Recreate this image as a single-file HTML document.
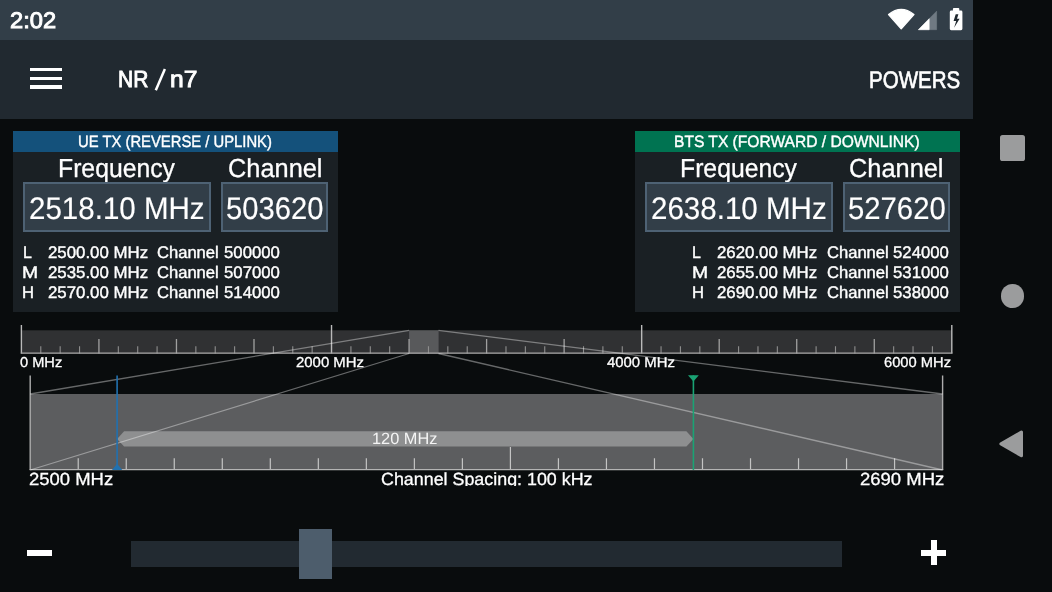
<!DOCTYPE html>
<html lang="en">
<head>
<meta charset="utf-8">
<title>NR / n7</title>
<style>
*{box-sizing:border-box;margin:0;padding:0}
html,body{width:1052px;height:592px;overflow:hidden;background:#090c0d;font-family:"Liberation Sans",sans-serif;color:#fff}
#screen{position:relative;width:1052px;height:592px;overflow:hidden;background:#090c0d}
.abs{position:absolute}
.t{position:absolute;white-space:pre;transform-origin:0 0;display:block;font-family:"Liberation Sans",sans-serif}
#status{left:0;top:0;width:973px;height:40px;background:#323e48;z-index:1}
#appbar{left:0;top:40px;width:973px;height:79px;background:#212930}
.panel{top:131px;width:325px;height:181px;background:#1a2024}
.phead{left:0;top:0;width:325px;height:21px}
.vbox{top:51px;height:49.7px;background:#323e48;border:2px solid #4e6274}
#track{left:131px;top:541px;width:711px;height:26px;background:#222a31}
#thumb{left:299px;top:529px;width:33px;height:50px;background:#4d5d6c}
.clip{position:absolute;left:0;top:0;width:1052px;height:486px;overflow:hidden;will-change:transform;z-index:3}
</style>
</head>
<body>
<div id="screen">
  <div id="status" class="abs"></div>
  <div id="appbar" class="abs"></div>

  <!-- status icons -->
  <svg class="abs" style="left:880px;top:0;z-index:2" width="93" height="39" viewBox="880 0 93 39">
    <path d="M888.6 14.6 Q901.2 4.2 913.9 14.6 L901.2 28.8 Z" fill="#fff" stroke="#fff" stroke-width="1.4" stroke-linejoin="round"/>
    <path d="M918.4 29.7 L936.6 11.2 L936.6 29.7 Z" fill="#707a83" stroke="#707a83" stroke-width="0.6" stroke-linejoin="round"/>
    <path d="M918.4 29.7 L929.2 18.7 L929.2 29.7 Z" fill="#fff" stroke="#fff" stroke-width="0.6" stroke-linejoin="round"/>
    <path d="M949.8 12 q0 -1.4 1.4 -1.4 h1.7 v-1.5 q0 -1 1 -1 h4.4 q1 0 1 1 v1.5 h1.7 q1.4 0 1.4 1.4 v16.8 q0 1.4 -1.4 1.4 h-9.8 q-1.4 0 -1.4 -1.4 Z" fill="#fff"/>
    <path d="M958.4 14.3 L955.7 14.3 L953.6 21 L956.2 21 L954.1 27.8 L959.6 18.7 L957 18.7 Z" fill="#1f282f"/>
  </svg>

  <!-- hamburger -->
  <div class="abs" style="left:30.3px;top:67.8px;width:31.5px;height:3.5px;background:#fff"></div>
  <div class="abs" style="left:30.3px;top:76.6px;width:31.5px;height:3.5px;background:#fff"></div>
  <div class="abs" style="left:30.3px;top:85.4px;width:31.5px;height:3.5px;background:#fff"></div>

  <svg class="abs" style="left:150px;top:64px" width="20" height="30" viewBox="150 64 20 30"><path d="M155.8 90.2L164.9 68.9" stroke="#fff" stroke-width="2.5" fill="none"/></svg>

  <!-- panels -->
  <div class="abs panel" style="left:13px">
    <div class="abs phead" style="background:#14517b"></div>
    <div class="abs vbox" style="left:10px;width:188px"></div>
    <div class="abs vbox" style="left:208px;width:107px"></div>
  </div>
  <div class="abs panel" style="left:635px">
    <div class="abs phead" style="background:#007351"></div>
    <div class="abs vbox" style="left:10px;width:188px"></div>
    <div class="abs vbox" style="left:208px;width:107px"></div>
  </div>

  <!-- rulers -->
  <svg class="abs" style="left:0;top:320px" width="973" height="160" viewBox="0 320 973 160">
    <rect x="21.4" y="330.3" width="930.4" height="23.2" fill="#303133"/>
    <rect x="409.1" y="330.3" width="29.5" height="23.2" fill="#58595b"/>
    <path d="M40.78 346.2V353.5 M60.17 346.2V353.5 M79.55 346.2V353.5 M118.32 346.2V353.5 M137.70 346.2V353.5 M157.08 346.2V353.5 M195.85 346.2V353.5 M215.23 346.2V353.5 M234.62 346.2V353.5 M273.38 346.2V353.5 M292.77 346.2V353.5 M312.15 346.2V353.5 M350.92 346.2V353.5 M370.30 346.2V353.5 M389.68 346.2V353.5 M428.45 346.2V353.5 M447.83 346.2V353.5 M467.22 346.2V353.5 M505.98 346.2V353.5 M525.37 346.2V353.5 M544.75 346.2V353.5 M583.52 346.2V353.5 M602.90 346.2V353.5 M622.28 346.2V353.5 M661.05 346.2V353.5 M680.43 346.2V353.5 M699.82 346.2V353.5 M738.58 346.2V353.5 M757.97 346.2V353.5 M777.35 346.2V353.5 M816.12 346.2V353.5 M835.50 346.2V353.5 M854.88 346.2V353.5 M893.65 346.2V353.5 M913.03 346.2V353.5 M932.42 346.2V353.5" stroke="#8e8e8e" stroke-width="1.1" fill="none"/>
    <path d="M98.93 339.0V353.5 M176.47 339.0V353.5 M254.00 339.0V353.5 M409.07 339.0V353.5 M486.60 339.0V353.5 M564.13 339.0V353.5 M719.20 339.0V353.5 M796.73 339.0V353.5 M874.27 339.0V353.5" stroke="#a0a0a0" stroke-width="1.3" fill="none"/>
    <path d="M21.40 325.1V353.5 M331.53 325.1V353.5 M641.67 325.1V353.5 M951.80 325.1V353.5" stroke="#bababa" stroke-width="1.4" fill="none"/>
    <path d="M20.799999999999997 353.2H952.4" stroke="#a8a8a8" stroke-width="1.2" fill="none"/>
    <rect x="30.2" y="394.0" width="912.4" height="76.0" fill="#5c5d5f"/>
    <path d="M117.1 438.9L124.1 431.3H686.4L693.4 438.9L686.4 446.5H124.1Z" fill="#8e8f90"/>
    <path d="M78.22 458.3V470.0 M126.24 458.3V470.0 M174.26 458.3V470.0 M222.28 458.3V470.0 M270.31 458.3V470.0 M318.33 458.3V470.0 M366.35 458.3V470.0 M414.37 458.3V470.0 M462.39 458.3V470.0 M510.41 447.0V470.0 M558.43 458.3V470.0 M606.45 458.3V470.0 M654.47 458.3V470.0 M702.49 458.3V470.0 M750.52 458.3V470.0 M798.54 458.3V470.0 M846.56 458.3V470.0 M894.58 458.3V470.0" stroke="#c4c4c4" stroke-width="1.2" fill="none"/>
    <path d="M30.2 375.4V470.0 M942.6 375.4V470.0" stroke="#adadad" stroke-width="1.4" fill="none"/>
    <path d="M29.599999999999998 469.6H943.2" stroke="#b4b4b4" stroke-width="1.2" fill="none"/>
    <path d="M409.1 330.3L30.2 394.0 M409.1 353.5L30.2 470.0 M438.5 330.3L942.6 394.0 M438.5 353.5L942.6 470.0" stroke="#fff" stroke-opacity="0.38" stroke-width="1.3" fill="none"/>
    <path d="M117.1 375.4V470.0" stroke="#2171af" stroke-width="1.6" fill="none"/>
    <path d="M111.9 470.0H122.3L117.1 463.8Z" fill="#2171af"/>
    <path d="M693.4 375.4V470.0" stroke="#1aa374" stroke-width="1.6" fill="none"/>
    <path d="M688.0 375.2H698.8L693.4 381.6Z" fill="#1aa374"/>
  </svg>

  <!-- slider -->
  <div class="abs" style="left:27px;top:550px;width:25px;height:5.5px;background:#fff"></div>
  <div id="track" class="abs"></div>
  <div id="thumb" class="abs"></div>
  <div class="abs" style="left:921.3px;top:549.9px;width:25px;height:5.7px;background:#fff"></div>
  <div class="abs" style="left:930.7px;top:540.2px;width:6.1px;height:24.6px;background:#fff"></div>

  <!-- nav bar -->
  <div class="abs" style="left:1000.2px;top:135.3px;width:24.8px;height:25.5px;border-radius:2.6px;background:#9b9c9d"></div>
  <div class="abs" style="left:1000.8px;top:284.3px;width:23.7px;height:23.7px;border-radius:50%;background:#9b9c9d"></div>
  <svg class="abs" style="left:990px;top:420px" width="50" height="50" viewBox="990 420 50 50">
    <path d="M1001 443.9 L1021.4 432.1 L1021.4 455.7 Z" fill="#9b9c9d" stroke="#9b9c9d" stroke-width="3.2" stroke-linejoin="round"/>
  </svg>

  <!-- value-box top borders drawn above label descenders -->
  <div class="abs" style="left:23px;top:182px;width:188px;height:2px;background:#4e6274;z-index:4"></div>
  <div class="abs" style="left:221px;top:182px;width:107px;height:2px;background:#4e6274;z-index:4"></div>
  <div class="abs" style="left:645px;top:182px;width:188px;height:2px;background:#4e6274;z-index:4"></div>
  <div class="abs" style="left:843px;top:182px;width:107px;height:2px;background:#4e6274;z-index:4"></div>

  <div class="clip">
<span class="t" id="t_time" style="left:9.71px;top:10px;font-size:22.5px;line-height:22.5px;font-weight:normal;text-rendering:geometricPrecision;-webkit-text-stroke:0.9px currentColor;color:#fff;transform:scaleX(1.0529)">2:02</span>
<span class="t" id="t_title" style="left:118.18px;top:68px;font-size:23.45px;line-height:23.45px;font-weight:normal;text-rendering:geometricPrecision;-webkit-text-stroke:0.9px currentColor;color:#fff;transform:scaleX(0.8952)">NR</span>
<span class="t" id="t_title2" style="left:170.18px;top:68px;font-size:23.45px;line-height:23.45px;font-weight:normal;text-rendering:geometricPrecision;-webkit-text-stroke:0.9px currentColor;color:#fff;transform:scaleX(1.0495)">n7</span>
<span class="t" id="t_powers" style="left:868.68px;top:69px;font-size:24.0px;line-height:24.0px;font-weight:normal;text-rendering:geometricPrecision;-webkit-text-stroke:0.65px currentColor;color:#fff;transform:scaleX(0.8548)">POWERS</span>
<span class="t" id="t_lh" style="left:78.39px;top:134px;font-size:16.4px;line-height:16.4px;font-weight:normal;text-rendering:geometricPrecision;-webkit-text-stroke:0.4px currentColor;color:#fff;transform:scaleX(0.9035)">UE TX (REVERSE / UPLINK)</span>
<span class="t" id="t_lf" style="left:57.84px;top:155px;font-size:26.0px;line-height:26.0px;font-weight:normal;text-rendering:geometricPrecision;-webkit-text-stroke:0.3px currentColor;color:#fff;transform:scaleX(0.9525)">Frequency</span>
<span class="t" id="t_lc" style="left:227.62px;top:155px;font-size:26.0px;line-height:26.0px;font-weight:normal;text-rendering:geometricPrecision;-webkit-text-stroke:0.3px currentColor;color:#fff;transform:scaleX(0.9756)">Channel</span>
<span class="t" id="t_lfv" style="left:29.17px;top:193px;font-size:31.25px;line-height:31.25px;font-weight:normal;text-rendering:geometricPrecision;-webkit-text-stroke:0.15px currentColor;color:#fff;transform:scaleX(0.9449)">2518.10 MHz</span>
<span class="t" id="t_lcv" style="left:225.99px;top:193px;font-size:31.25px;line-height:31.25px;font-weight:normal;text-rendering:geometricPrecision;-webkit-text-stroke:0.15px currentColor;color:#fff;transform:scaleX(0.9340)">503620</span>
<span class="t" id="t_rh" style="left:674.33px;top:134px;font-size:16.4px;line-height:16.4px;font-weight:normal;text-rendering:geometricPrecision;-webkit-text-stroke:0.4px currentColor;color:#fff;transform:scaleX(0.9508)">BTS TX (FORWARD / DOWNLINK)</span>
<span class="t" id="t_rf" style="left:679.84px;top:155px;font-size:26.0px;line-height:26.0px;font-weight:normal;text-rendering:geometricPrecision;-webkit-text-stroke:0.3px currentColor;color:#fff;transform:scaleX(0.9525)">Frequency</span>
<span class="t" id="t_rc" style="left:849.22px;top:155px;font-size:26.0px;line-height:26.0px;font-weight:normal;text-rendering:geometricPrecision;-webkit-text-stroke:0.3px currentColor;color:#fff;transform:scaleX(0.9756)">Channel</span>
<span class="t" id="t_rfv" style="left:650.97px;top:193px;font-size:31.25px;line-height:31.25px;font-weight:normal;text-rendering:geometricPrecision;-webkit-text-stroke:0.15px currentColor;color:#fff;transform:scaleX(0.9454)">2638.10 MHz</span>
<span class="t" id="t_rcv" style="left:847.99px;top:193px;font-size:31.25px;line-height:31.25px;font-weight:normal;text-rendering:geometricPrecision;-webkit-text-stroke:0.15px currentColor;color:#fff;transform:scaleX(0.9369)">527620</span>
<span class="t" id="t_r0" style="left:20.43px;top:356px;font-size:14.35px;line-height:14.35px;font-weight:normal;text-rendering:geometricPrecision;-webkit-text-stroke:0.3px currentColor;color:#fff;transform:scaleX(1.0189)">0 MHz</span>
<span class="t" id="t_r2" style="left:296.27px;top:356px;font-size:14.35px;line-height:14.35px;font-weight:normal;text-rendering:geometricPrecision;-webkit-text-stroke:0.3px currentColor;color:#fff;transform:scaleX(1.0411)">2000 MHz</span>
<span class="t" id="t_r4" style="left:607.03px;top:356px;font-size:14.35px;line-height:14.35px;font-weight:normal;text-rendering:geometricPrecision;-webkit-text-stroke:0.3px currentColor;color:#fff;transform:scaleX(1.0387)">4000 MHz</span>
<span class="t" id="t_r6" style="left:884.02px;top:356px;font-size:14.35px;line-height:14.35px;font-weight:normal;text-rendering:geometricPrecision;-webkit-text-stroke:0.3px currentColor;color:#fff;transform:scaleX(1.0254)">6000 MHz</span>
<span class="t" id="t_bw" style="left:372.49px;top:431px;font-size:16.25px;line-height:16.25px;font-weight:normal;text-rendering:geometricPrecision;color:#f4f4f4;transform:scaleX(1.0051)">120 MHz</span>
<span class="t" id="t_lo" style="left:29.32px;top:471px;font-size:17.55px;line-height:17.55px;font-weight:normal;text-rendering:geometricPrecision;-webkit-text-stroke:0.3px currentColor;color:#fff;transform:scaleX(1.0530)">2500 MHz</span>
<span class="t" id="t_cs" style="left:380.72px;top:471px;font-size:17.55px;line-height:17.55px;font-weight:normal;text-rendering:geometricPrecision;-webkit-text-stroke:0.3px currentColor;color:#fff;transform:scaleX(1.0190)">Channel Spacing: 100 kHz</span>
<span class="t" id="t_hi" style="left:859.92px;top:471px;font-size:17.55px;line-height:17.55px;font-weight:normal;text-rendering:geometricPrecision;-webkit-text-stroke:0.3px currentColor;color:#fff;transform:scaleX(1.0543)">2690 MHz</span>
<span class="t" id="t_l0a" style="left:22.52px;top:245px;font-size:16.8px;line-height:16.8px;font-weight:normal;text-rendering:geometricPrecision;-webkit-text-stroke:0.4px currentColor;color:#fff;transform:scaleX(0.9506)">L</span>
<span class="t" id="t_l0b" style="left:47.64px;top:245px;font-size:16.8px;line-height:16.8px;font-weight:normal;text-rendering:geometricPrecision;-webkit-text-stroke:0.4px currentColor;color:#fff;transform:scaleX(1.0027)">2500.00 MHz</span>
<span class="t" id="t_l0c" style="left:157.37px;top:245px;font-size:16.8px;line-height:16.8px;font-weight:normal;text-rendering:geometricPrecision;-webkit-text-stroke:0.4px currentColor;color:#fff;transform:scaleX(0.9874)">Channel</span>
<span class="t" id="t_l0d" style="left:223.61px;top:245px;font-size:16.8px;line-height:16.8px;font-weight:normal;text-rendering:geometricPrecision;-webkit-text-stroke:0.4px currentColor;color:#fff;transform:scaleX(0.9979)">500000</span>
<span class="t" id="t_l1a" style="left:22.28px;top:265px;font-size:16.8px;line-height:16.8px;font-weight:normal;text-rendering:geometricPrecision;-webkit-text-stroke:0.4px currentColor;color:#fff;transform:scaleX(1.1529)">M</span>
<span class="t" id="t_l1b" style="left:47.64px;top:265px;font-size:16.8px;line-height:16.8px;font-weight:normal;text-rendering:geometricPrecision;-webkit-text-stroke:0.4px currentColor;color:#fff;transform:scaleX(1.0027)">2535.00 MHz</span>
<span class="t" id="t_l1c" style="left:157.37px;top:265px;font-size:16.8px;line-height:16.8px;font-weight:normal;text-rendering:geometricPrecision;-webkit-text-stroke:0.4px currentColor;color:#fff;transform:scaleX(0.9874)">Channel</span>
<span class="t" id="t_l1d" style="left:223.61px;top:265px;font-size:16.8px;line-height:16.8px;font-weight:normal;text-rendering:geometricPrecision;-webkit-text-stroke:0.4px currentColor;color:#fff;transform:scaleX(0.9979)">507000</span>
<span class="t" id="t_l2a" style="left:22.47px;top:285px;font-size:16.8px;line-height:16.8px;font-weight:normal;text-rendering:geometricPrecision;-webkit-text-stroke:0.4px currentColor;color:#fff;transform:scaleX(0.9926)">H</span>
<span class="t" id="t_l2b" style="left:47.64px;top:285px;font-size:16.8px;line-height:16.8px;font-weight:normal;text-rendering:geometricPrecision;-webkit-text-stroke:0.4px currentColor;color:#fff;transform:scaleX(1.0027)">2570.00 MHz</span>
<span class="t" id="t_l2c" style="left:157.37px;top:285px;font-size:16.8px;line-height:16.8px;font-weight:normal;text-rendering:geometricPrecision;-webkit-text-stroke:0.4px currentColor;color:#fff;transform:scaleX(0.9874)">Channel</span>
<span class="t" id="t_l2d" style="left:223.61px;top:285px;font-size:16.8px;line-height:16.8px;font-weight:normal;text-rendering:geometricPrecision;-webkit-text-stroke:0.4px currentColor;color:#fff;transform:scaleX(0.9979)">514000</span>
<span class="t" id="t_r0a" style="left:692.32px;top:245px;font-size:16.8px;line-height:16.8px;font-weight:normal;text-rendering:geometricPrecision;-webkit-text-stroke:0.4px currentColor;color:#fff;transform:scaleX(0.9506)">L</span>
<span class="t" id="t_r0b" style="left:717.44px;top:245px;font-size:16.8px;line-height:16.8px;font-weight:normal;text-rendering:geometricPrecision;-webkit-text-stroke:0.4px currentColor;color:#fff;transform:scaleX(1.0027)">2620.00 MHz</span>
<span class="t" id="t_r0c" style="left:827.17px;top:245px;font-size:16.8px;line-height:16.8px;font-weight:normal;text-rendering:geometricPrecision;-webkit-text-stroke:0.4px currentColor;color:#fff;transform:scaleX(0.9874)">Channel</span>
<span class="t" id="t_r0d" style="left:893.41px;top:245px;font-size:16.8px;line-height:16.8px;font-weight:normal;text-rendering:geometricPrecision;-webkit-text-stroke:0.4px currentColor;color:#fff;transform:scaleX(0.9979)">524000</span>
<span class="t" id="t_r1a" style="left:692.08px;top:265px;font-size:16.8px;line-height:16.8px;font-weight:normal;text-rendering:geometricPrecision;-webkit-text-stroke:0.4px currentColor;color:#fff;transform:scaleX(1.1529)">M</span>
<span class="t" id="t_r1b" style="left:717.44px;top:265px;font-size:16.8px;line-height:16.8px;font-weight:normal;text-rendering:geometricPrecision;-webkit-text-stroke:0.4px currentColor;color:#fff;transform:scaleX(1.0027)">2655.00 MHz</span>
<span class="t" id="t_r1c" style="left:827.17px;top:265px;font-size:16.8px;line-height:16.8px;font-weight:normal;text-rendering:geometricPrecision;-webkit-text-stroke:0.4px currentColor;color:#fff;transform:scaleX(0.9874)">Channel</span>
<span class="t" id="t_r1d" style="left:893.41px;top:265px;font-size:16.8px;line-height:16.8px;font-weight:normal;text-rendering:geometricPrecision;-webkit-text-stroke:0.4px currentColor;color:#fff;transform:scaleX(0.9979)">531000</span>
<span class="t" id="t_r2a" style="left:692.27px;top:285px;font-size:16.8px;line-height:16.8px;font-weight:normal;text-rendering:geometricPrecision;-webkit-text-stroke:0.4px currentColor;color:#fff;transform:scaleX(0.9926)">H</span>
<span class="t" id="t_r2b" style="left:717.44px;top:285px;font-size:16.8px;line-height:16.8px;font-weight:normal;text-rendering:geometricPrecision;-webkit-text-stroke:0.4px currentColor;color:#fff;transform:scaleX(1.0027)">2690.00 MHz</span>
<span class="t" id="t_r2c" style="left:827.17px;top:285px;font-size:16.8px;line-height:16.8px;font-weight:normal;text-rendering:geometricPrecision;-webkit-text-stroke:0.4px currentColor;color:#fff;transform:scaleX(0.9874)">Channel</span>
<span class="t" id="t_r2d" style="left:893.41px;top:285px;font-size:16.8px;line-height:16.8px;font-weight:normal;text-rendering:geometricPrecision;-webkit-text-stroke:0.4px currentColor;color:#fff;transform:scaleX(0.9979)">538000</span>
  </div>
</div>
</body>
</html>
